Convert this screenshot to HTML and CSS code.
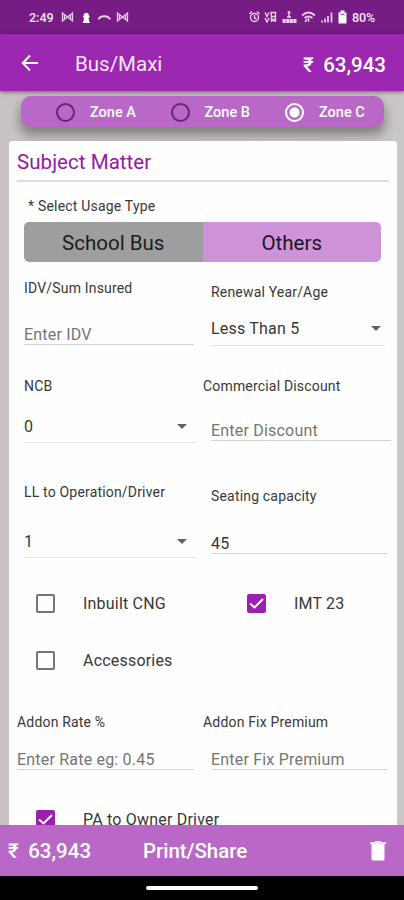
FILE: index.html
```html
<!DOCTYPE html>
<html lang="en">
<head>
<meta charset="utf-8">
<title>Bus/Maxi</title>
<link rel="stylesheet" href="styles.css">
</head>
<body>
<div class="screen">
  <div class="status">
    <span class="time">2:49</span>
    <svg class="s-left" width="70" height="14" viewBox="0 0 70 14" fill="none" stroke="#e8cdec" stroke-width="1.3">
      <path d="M1.500 11V3l5 4 5-4v8l-5-4zM3.500 4.500v5M9.500 4.500v5"/>
      <path d="M21.500 13h7.500l-1.200-2.700V7.600l1-1.200-1-1.200a2.500 2.500 0 1 0-5 0l-1 1.200 1 1.200v2.700z" fill="#fff" stroke="none"/>
      <path d="M37.500 9.500c1.500-4.500 10-4.500 11.500 0" stroke-width="2"/>
      <path d="M56.500 11V3l5 4 5-4v8l-5-4zM58.500 4.500v5M64.500 4.500v5"/>
    </svg>
    <svg class="s-right" width="103" height="16" viewBox="0 0 103 16" fill="none" stroke="#e8cdec" stroke-width="1.400">
      <circle cx="6.500" cy="8.500" r="4"/><path d="M6.500 6v3l2 1M1.500 5l2.500-2.500M11.500 5L9 2.500"/>
      <path d="M17 3.500l2 4 2-4M17 9l2 4 2-4M23.500 13V9l2 3 2-3v4M23 3.500h4.500v4H23.500z"/>
      <path d="M41 2v7M39.500 3.500h3M39 8h4" stroke-width="1.500"/><path d="M34.500 12h14" stroke-width="4" stroke-dasharray="3.200 .4"/>
      <path d="M54 6.500q6.500-6 13 0M56.500 9q4-3 8 0" stroke-width="1.800"/><path d="M60.500 9v4M57 13l2-3"/>
      <path d="M74 13.500v-2M77 13.500v-4M80 13.500V7M83.500 13.500V3.500" stroke-width="1.700"/>
      <path d="M90.500 3.500h2V1.500h4v2h2V14.500h-8z" fill="#fff" stroke="none"/><path d="M92.500 5.500h4" stroke="#9b5ba8"/>
    </svg>
    <span class="pct">80%</span>
  </div>

  <div class="appbar">
    <svg class="back" width="18" height="18" viewBox="0 0 18 18" fill="none" stroke="#fff" stroke-width="2"><path d="M17 9H2M9 1.500L1.800 9 9 16.500"/></svg>
    <span class="title">Bus/Maxi</span>
    <span class="amount"><i>₹</i>63,943</span>
  </div>

  <div class="content">
    <div class="zones">
      <div class="zone"><span class="radio"></span><span>Zone A</span></div>
      <div class="zone"><span class="radio"></span><span>Zone B</span></div>
      <div class="zone"><span class="radio on"></span><span>Zone C</span></div>
    </div>

    <div class="card">
      <h1>Subject Matter</h1>
      <p class="usage">* Select Usage Type</p>
      <div class="segment"><span class="seg">School Bus</span><span class="seg active">Others</span></div>

      <div class="row row-a">
        <div class="field idv"><label>IDV/Sum Insured</label><div class="value hint">Enter IDV</div></div>
        <div class="field age"><label>Renewal Year/Age</label><div class="value select">Less Than 5<b class="caret"></b></div></div>
      </div>
      <div class="row row-b">
        <div class="field ncb"><label>NCB</label><div class="value select">0<b class="caret"></b></div></div>
        <div class="field disc"><label class="outdent">Commercial Discount</label><div class="value hint">Enter Discount</div></div>
      </div>
      <div class="row row-c">
        <div class="field ll"><label>LL to Operation/Driver</label><div class="value select">1<b class="caret"></b></div></div>
        <div class="field seat"><label>Seating capacity</label><div class="value">45</div></div>
      </div>

      <div class="checks">
        <div class="check"><span class="box"></span><span>Inbuilt CNG</span></div>
        <div class="check"><span class="box on"><svg width="19" height="19" viewBox="0 0 19 19"><path d="M3 9.500l4.500 4L16 5" fill="none" stroke="#fff" stroke-width="2"/></svg></span><span>IMT 23</span></div>
        <div class="check"><span class="box"></span><span>Accessories</span></div>
      </div>

      <div class="row row-d">
        <div class="field rate"><label>Addon Rate %</label><div class="value hint">Enter Rate eg: 0.45</div></div>
        <div class="field fix"><label class="outdent">Addon Fix Premium</label><div class="value hint">Enter Fix Premium</div></div>
      </div>
      <div class="check owner"><span class="box on"><svg width="19" height="19" viewBox="0 0 19 19"><path d="M3 9.500l4.500 4L16 5" fill="none" stroke="#fff" stroke-width="2"/></svg></span><span>PA to Owner Driver</span></div>
    </div>
  </div>

  <div class="bottom">
    <span class="total"><i>₹</i>63,943</span>
    <span class="print">Print/Share</span>
    <svg class="trash" width="16" height="20" viewBox="0 0 16 20" fill="#fff"><path d="M1.500 3h13v15a1.500 1.500 0 0 1-1.500 1.500H3A1.500 1.500 0 0 1 1.500 18z"/><path d="M0 1h4.500l1-1h5l1 1H16v2H0z" opacity=".8"/></svg>
  </div>
  <div class="nav"><span></span></div>
</div>
</body>
</html>
```
FILE: styles.css
```css
* { box-sizing: border-box; }
body { margin: 0; font-family: Roboto, "Liberation Sans", sans-serif; color: #383838; }
i { font-style: normal; }
.screen { width: 404px; height: 900px; display: flex; flex-direction: column; overflow: hidden; }

.status { height: 34px; flex: none; background: #771c85; display: flex; align-items: center; padding: 0 28px 0 29px; color: #f5e6f7; font-size: 12.500px; font-weight: 500; }
.time { width: 32px; }
.s-right { margin-left: auto; margin-right: 1px; }
.pct { width: 24px; letter-spacing: -.1px; }

.appbar { height: 57px; flex: none; background: #9c27b0; display: flex; align-items: center; padding: 1px 18px 0 21px; color: #f7e6fa; box-shadow: 0 1px 4px rgba(0,0,0,.5); position: relative; z-index: 1; }
.title { margin-left: 36px; padding-top: 1px; font-size: 20.500px; }
.amount { margin-left: auto; padding-top: 3px; font-size: 20.500px; font-weight: 500; color: #fff; }
.amount i, .total i { margin-right: 9.500px; }

.content { flex: 1; min-height: 0; overflow: hidden; background: linear-gradient(90deg, #c9c4c4, #cac8c6); padding: 5px 7px 0 9px; }
.zones { height: 31px; margin: 0 13px 14px 12px; background: #ba68c8; border-radius: 10px; box-shadow: 0 7px 12px 1px rgba(0,0,0,.36); display: flex; align-items: center; padding-left: 35px; color: #fff; font-size: 14.500px; font-weight: 500; }
.zone { display: flex; flex: none; align-items: center; width: 114.500px; padding-top: 1px; white-space: nowrap; }
.radio { width: 19px; height: 19px; flex: none; border: 2px solid #612a70; border-radius: 50%; margin-right: 15px; }
.radio.on { border-color: #fff; background: radial-gradient(circle, #fff 0 4.500px, transparent 5.500px); }

.card { background: #fefefe; border-radius: 3px 3px 0 0; height: 700px; overflow: hidden; }
h1 { margin: 0 8px; height: 41px; border-bottom: 2px solid #ddd; line-height: 42px; font-size: 20.500px; font-weight: 400; color: #911ba5; letter-spacing: .05px; }
.usage { margin: 13px 0 7px 19px; height: 20px; line-height: 22px; font-size: 14px; letter-spacing: .2px; }
.segment { display: flex; height: 40px; margin: 0 16px 0 15px; border-radius: 5px; overflow: hidden; }
.seg { flex: 1; background: #9e9e9e; color: #1c1c1c; text-align: center; line-height: 42px; font-size: 20.500px; }
.seg.active { background: #ce93d8; color: #201523; }

.row { display: flex; }
.field { display: flex; flex-direction: column; }
label { height: 20px; line-height: 22px; font-size: 14px; letter-spacing: .18px; white-space: nowrap; }
.outdent { margin-left: -8px; }
.value { height: 21px; line-height: 22px; font-size: 16px; letter-spacing: .2px; border-bottom: 1px solid #d2d2d2; display: flex; justify-content: space-between; white-space: nowrap; }
.hint { color: #757575; }
.select { border-color: #e5e5e5; }
.caret { width: 0; height: 0; border: 5px solid transparent; border-top-color: #616161; border-bottom: 0; margin: 8px 9px 0 0; }
.row-a { height: 98px; margin-top: 13px; }
.row-b { height: 107px; }
.row-c { height: 95px; }
.row-d { height: 94px; margin-top: 22px; }
.idv { width: 170px; margin: 2px 17px 0 15px; }
.idv .value { margin-top: 27px; }
.age { width: 174px; padding-top: 6px; }
.age .value { margin-top: 17px; height: 28px; }
.age .caret { margin-right: 4px; }
.ncb, .ll { width: 172px; margin: 2px 15px 0; }
.ncb .value { margin-top: 21px; height: 27px; }
.disc { width: 180px; padding-top: 2px; }
.disc .value { margin-top: 25px; }
.ll label { margin-top: -1px; }
.ll .value { margin-top: 30px; height: 27px; }
.seat { width: 177px; padding-top: 5px; }
.seat .value { margin-top: 28px; }
.checks { display: grid; grid-template-columns: 211px 1fr; grid-auto-rows: 57px; }
.check { display: flex; align-items: center; font-size: 16px; letter-spacing: .2px; padding-left: 27px; }
.checks .check:nth-child(-n+2) { padding-bottom: 1px; }
.box { width: 19px; height: 19px; flex: none; border: 2px solid #757575; border-radius: 2px; margin-right: 28px; }
.box.on { border: 0; background: #9c1fb1; }
.box svg { display: block; }
.rate { width: 177px; margin: 0 17px 0 8px; }
.fix { width: 177px; }
.rate .value, .fix .value { margin-top: 18px; }
.owner { height: 20px; margin-top: 4px; }

.bottom { height: 51px; flex: none; background: #ba68c8; color: #fff; display: flex; align-items: center; padding: 0 18px 0 8px; font-size: 20.500px; font-weight: 500; }
.total { width: 135px; }
.print { letter-spacing: -.05px; }
.trash { margin-left: auto; }
.nav { height: 24px; flex: none; background: #000; display: flex; justify-content: center; align-items: center; }
.nav span { width: 112px; height: 4px; border-radius: 2px; background: #fff; }
```
